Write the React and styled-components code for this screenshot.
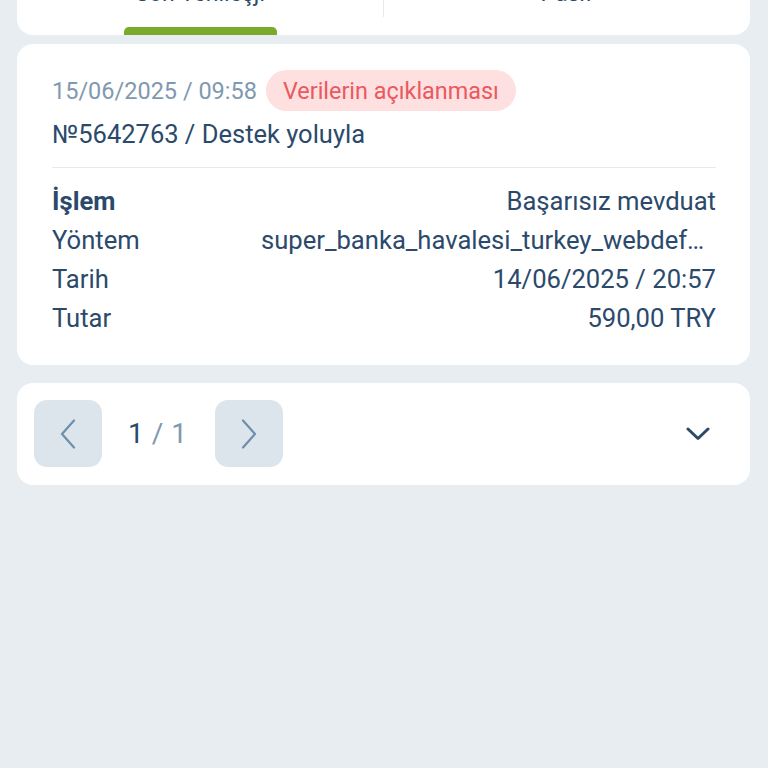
import React from "react";
import styled, { createGlobalStyle } from "styled-components";

const Global = createGlobalStyle`
  html, body { margin: 0; padding: 0; background: #e8edf1; }
  body { font-family: Roboto, "Noto Sans", "Liberation Sans", sans-serif; color: #2b4a6b; overflow: hidden; }
  * { box-sizing: border-box; }
`;

const Page = styled.div`
  display: flex;
  flex-direction: column;
  padding: 0 18px 0 17px;
  min-height: 768px;
`;

const TabCard = styled.div`
  margin-top: -40px;
  background: #fff;
  border-radius: 0 0 16px 16px;
  display: grid;
  grid-template-columns: 1fr 1fr;
`;

const Tab = styled.div`
  display: flex;
  flex-direction: column;
  align-items: center;
  position: relative;
  ${(p) => p.$divider && `
    &::after {
      content: "";
      position: absolute;
      right: 0;
      top: 0;
      height: 57px;
      width: 1px;
      background: #e6eaee;
    }
  `}
`;

const TabLabel = styled.div`
  padding: 21px 0 10px;
  font-size: 23px;
  line-height: 26px;
  color: #2b4a6b;
`;

const Indicator = styled.div`
  margin-top: 10px;
  width: 153px;
  height: 8px;
  border-radius: 5px 5px 0 0;
  background: ${(p) => (p.$active ? "#7aa92c" : "transparent")};
`;

const Card = styled.div`
  background: #fff;
  border-radius: 16px;
  margin-top: ${(p) => p.$mt}px;
`;

const TxCard = styled(Card)`
  padding: 26px 34px 27px 35px;
`;

const Header = styled.div`
  display: flex;
  align-items: center;
  gap: 9px;
`;

const DateText = styled.span`
  font-size: 23.5px;
  color: #7f99b0;
`;

const Badge = styled.span`
  height: 41px;
  display: inline-flex;
  align-items: center;
  padding: 0 17px;
  border-radius: 21px;
  background: #fde0df;
  color: #ea5860;
  font-size: 23.4px;
`;

const Number = styled.div`
  margin-top: 9px;
  font-size: 25.5px;
  line-height: 29px;
`;

const Divider = styled.div`
  margin-top: 18px;
  height: 1px;
  background: #e7eaed;
`;

const Rows = styled.div`
  margin-top: 14px;
  display: flex;
  flex-direction: column;
`;

const Row = styled.div`
  display: flex;
  justify-content: space-between;
  gap: 24px;
  font-size: 25.6px;
  line-height: 39px;
`;

const Key = styled.span`
  font-weight: ${(p) => (p.$bold ? 700 : 400)};
  white-space: nowrap;
`;

const Value = styled.span`
  white-space: nowrap;
  overflow: hidden;
  text-overflow: ellipsis;
  min-width: 0;
  max-width: 455px;
  text-align: right;
`;

const PagerCard = styled(Card)`
  padding: 17px 40px 18px 17px;
  display: flex;
  align-items: center;
`;

const PageButton = styled.button`
  width: 68px;
  height: 67px;
  border: none;
  border-radius: 13px;
  background: #dce5ec;
  display: flex;
  align-items: center;
  justify-content: center;
  padding: 0;
`;

const PageInfo = styled.div`
  margin: 0 28px 0 26px;
  font-size: 28px;
  color: #7f99b0;
  letter-spacing: 0.5px;
`;

const Current = styled.span`
  color: #2b4a6b;
`;

const Spacer = styled.div`
  flex: 1;
`;

const Chev = ({ dir }) => (
  <svg width="16" height="30" viewBox="0 0 16 30" fill="none">
    <path
      d={dir === "left" ? "M14 1.5 L2 15 L14 28.5" : "M2 1.5 L14 15 L2 28.5"}
      stroke="#6f8eaa"
      strokeWidth="2.2"
      strokeLinecap="round"
      strokeLinejoin="round"
    />
  </svg>
);

const ChevDown = () => (
  <svg width="24" height="14" viewBox="0 0 24 14" fill="none">
    <path d="M2 2 L12 11.5 L22 2" stroke="#2b4a6b" strokeWidth="3" strokeLinecap="round" strokeLinejoin="round" />
  </svg>
);

const rows = [
  { k: "İşlem", v: "Başarısız mevduat", bold: true },
  { k: "Yöntem", v: "super_banka_havalesi_turkey_webdefault" },
  { k: "Tarih", v: "14/06/2025 / 20:57" },
  { k: "Tutar", v: "590,00 TRY" },
];

export default function App() {
  return (
    <>
      <Global />
      <Page>
        <TabCard>
          <Tab $divider>
            <TabLabel>Son Yenileşj.</TabLabel>
            <Indicator $active />
          </Tab>
          <Tab>
            <TabLabel>Pasif</TabLabel>
            <Indicator />
          </Tab>
        </TabCard>

        <TxCard $mt={9}>
          <Header>
            <DateText>15/06/2025 / 09:58</DateText>
            <Badge>Verilerin açıklanması</Badge>
          </Header>
          <Number>№5642763 / Destek yoluyla</Number>
          <Divider />
          <Rows>
            {rows.map((r) => (
              <Row key={r.k}>
                <Key $bold={r.bold}>{r.k}</Key>
                <Value>{r.v}</Value>
              </Row>
            ))}
          </Rows>
        </TxCard>

        <PagerCard $mt={18}>
          <PageButton aria-label="Önceki">
            <Chev dir="left" />
          </PageButton>
          <PageInfo>
            <Current>1</Current> / 1
          </PageInfo>
          <PageButton aria-label="Sonraki">
            <Chev dir="right" />
          </PageButton>
          <Spacer />
          <ChevDown />
        </PagerCard>
      </Page>
    </>
  );
}
